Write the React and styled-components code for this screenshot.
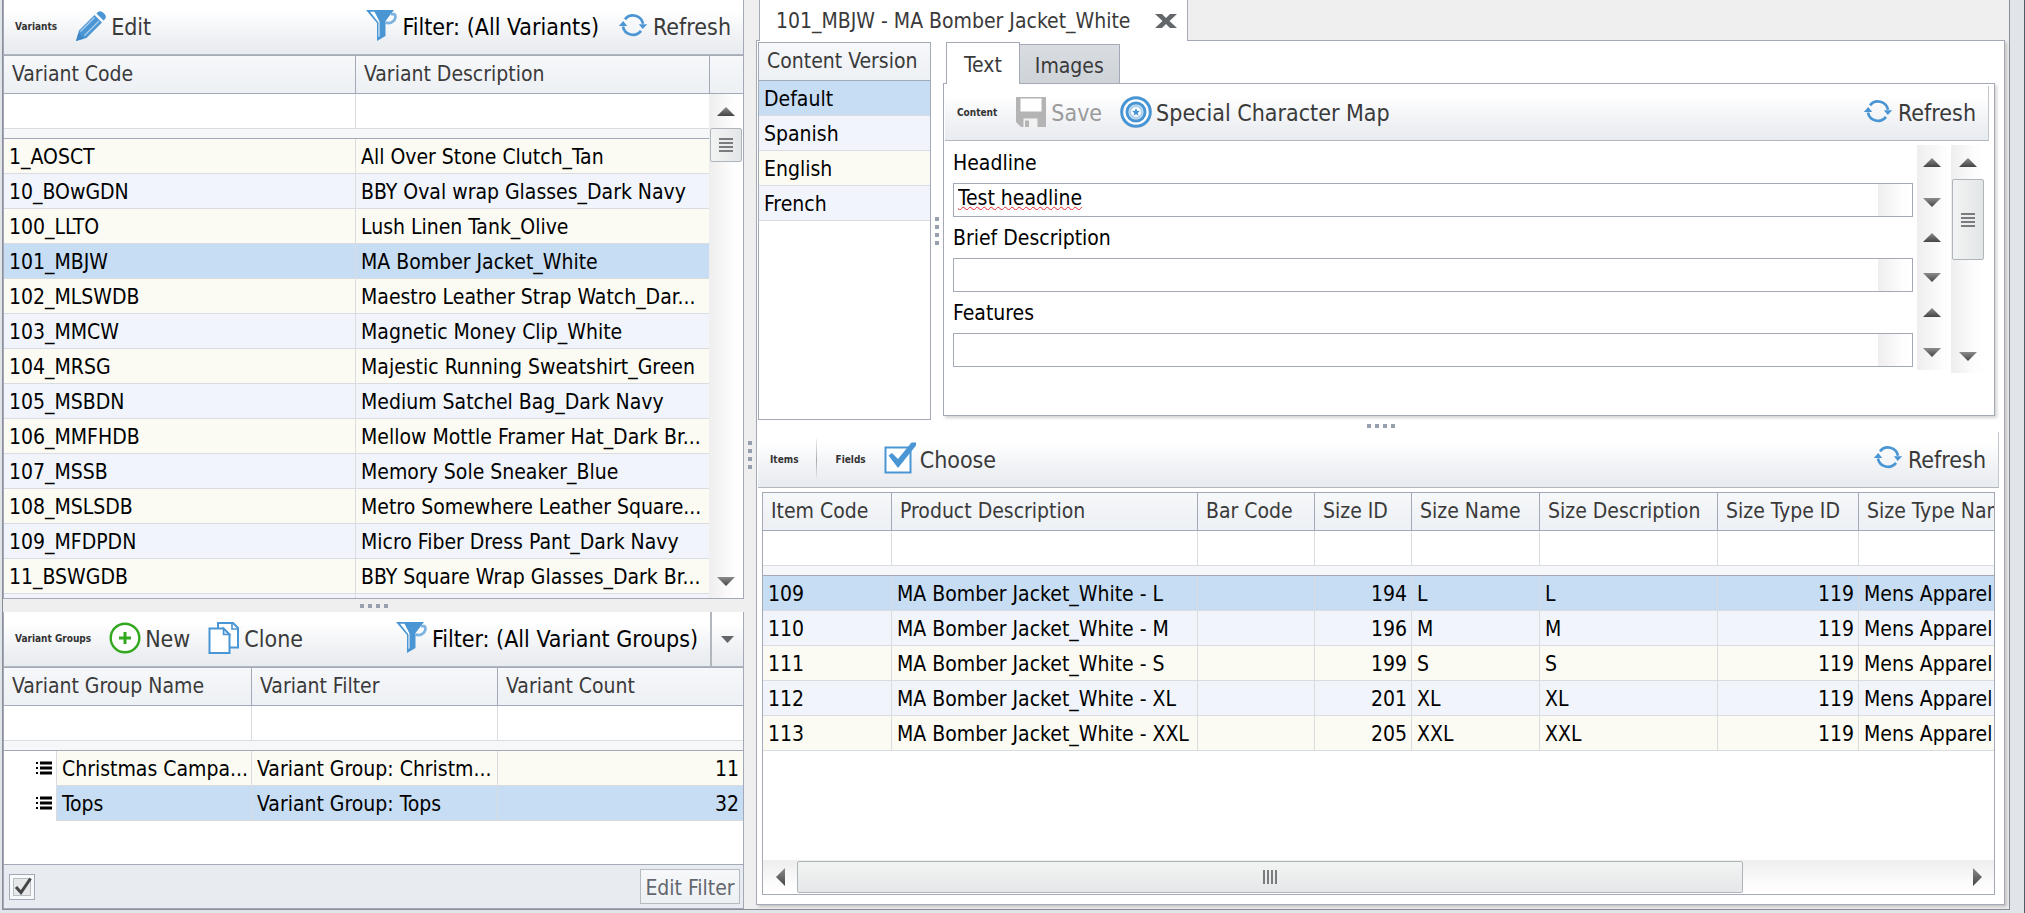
import React, { useState } from 'react';
import styled, { createGlobalStyle, css } from 'styled-components';

const line = '#a3a9b6';
const cellLine = '#d9dce1';
const blue = '#4a95d3';
const selectedBg = '#c7ddf4';
const creamBg = '#fbfbf3';
const paleBg = '#f1f5fb';

const GlobalStyle = createGlobalStyle`
  *, *::before, *::after { box-sizing: border-box; }
  body {
    margin: 0;
    font-family: "DejaVu Sans Condensed", "Noto Sans", sans-serif;
    font-size: 21px;
    line-height: 24px;
    color: #000;
  }
  button, input { font: inherit; color: inherit; }
`;

/* ---------- window and panes ---------- */

const Frame = styled.div`
  height: 100vh;
  padding: 0 14px 3px 2px;
  background: #e1e5e9;
  border-right: 1px solid #555b66;
`;

const Window = styled.main`
  height: 100%;
  display: grid;
  grid-template-columns: minmax(0, 741fr) 12px minmax(0, 1253fr);
  background: #efefef;
  border: 1px solid #888e98;
  border-top: none;
`;

const LeftPane = styled.div`
  display: flex;
  flex-direction: column;
  min-width: 0;
  min-height: 0;
`;

const ListPanel = styled.section`
  display: flex;
  flex-direction: column;
  flex: ${(p) => (p.$grow ? '1 1 0' : '0 0 auto')};
  min-height: 0;
  background: #fff;
  border: 1px solid ${line};
  border-top: none;
`;

const Splitter = styled.div`
  flex: 0 0 ${(p) => p.$size || 12}px;
  display: flex;
  flex-direction: ${(p) => (p.$vertical ? 'column' : 'row')};
  align-items: center;
  justify-content: center;
  gap: 4px;
`;

const Dot = styled.span`
  width: 4px;
  height: 4px;
  background: #97a0ad;
`;

function Grip(props) {
  return (
    <Splitter role="separator" {...props}>
      <Dot /><Dot /><Dot /><Dot />
    </Splitter>
  );
}

/* ---------- toolbar ---------- */

const Toolbar = styled.div`
  flex: 0 0 ${(p) => (p.$tall ? 56 : 55)}px;
  display: flex;
  align-items: center;
  gap: 18px;
  padding: 0 ${(p) => (p.$flush ? 0 : 12)}px 0 ${(p) => (p.$inset ? 12 : 11)}px;
  margin-right: ${(p) => (p.$inset ? 5 : 0)}px;
  background: linear-gradient(#fff 20%, #f0f2f5 65%, #e8ebef);
  border-bottom: 1px solid #b2b6bd;
  border-right: ${(p) => (p.$inset ? '1px solid #c3c7ce' : 'none')};
`;

const ToolbarTitle = styled.span`
  font-size: 10px;
  line-height: 12px;
  font-weight: 700;
  color: #333;
  white-space: nowrap;
`;

const ToolButton = styled.button`
  display: flex;
  align-items: center;
  gap: 4px;
  padding: 0;
  border: none;
  background: none;
  font-size: 23px;
  line-height: 28px;
  white-space: nowrap;
  color: ${(p) => (p.$strong ? '#000' : '#3a3a3a')};
  &:disabled { color: #9a9a9a; }
  svg { flex: none; margin-bottom: 3px; }
`;

const Spacer = styled.div`flex: 1;`;

const Divider = styled.span`
  width: 1px;
  height: 42px;
  background: linear-gradient(#eceef0, #a9adb3, #eceef0);
`;

const DropButton = styled.button`
  width: 33px;
  height: 54px;
  margin-left: -6px;
  padding: 0;
  border: none;
  border-left: 2px solid #b2b6bd;
  background: none;
  display: flex;
  align-items: center;
  justify-content: center;
`;

/* ---------- tables ---------- */

const GridArea = styled.div`
  display: flex;
  flex: ${(p) => (p.$grow ? '1 1 0' : '0 0 197px')};
  min-height: 0;
  overflow: hidden;
  border-top: 1px solid ${line};
`;

const TableWrap = styled.div`
  flex: 1;
  min-width: 0;
  overflow: hidden;
`;

const Table = styled.table`
  width: 100%;
  table-layout: fixed;
  border-collapse: separate;
  border-spacing: 0;
`;

const headerCell = css`
  height: 38px;
  background: linear-gradient(#f6f8fa, #edf0f4);
  border-bottom: 1px solid ${line};
`;

const Th = styled.th`
  ${headerCell}
  padding: 0 0 2px 8px;
  border-right: ${(p) => (p.$last ? 'none' : `1px solid ${line}`)};
  font-weight: 400;
  text-align: left;
  white-space: nowrap;
  overflow: hidden;
  color: #3a3a3a;
`;

const FilterCell = styled.td`
  height: 35px;
  padding: 0;
  border-right: ${(p) => (p.$last ? 'none' : `1px solid ${cellLine}`)};
  border-bottom: 1px solid ${cellLine};
`;

const FilterInput = styled.input`
  display: block;
  width: 100%;
  height: 34px;
  padding: 0 6px;
  border: none;
  outline: none;
  background: transparent;
`;

const BandCell = styled.td`
  height: 10px;
  padding: 0;
  background: #f5f7f9;
  border-bottom: 1px solid ${line};
`;

const rowColour = { selected: selectedBg, cream: creamBg, pale: paleBg };

const Tr = styled.tr`
  background: ${(p) => rowColour[p.$tone]};
`;

const Td = styled.td`
  height: 35px;
  padding: 2px 4px 0 5px;
  border-right: ${(p) => (p.$last ? 'none' : `1px solid ${cellLine}`)};
  border-bottom: 1px solid ${cellLine};
  text-align: ${(p) => (p.$num ? 'right' : 'left')};
  white-space: nowrap;
  overflow: hidden;
`;

const IndentTd = styled.td`
  padding: 0 4px 0 0;
  background: #fff;
  border-right: 1px solid ${cellLine};
  text-align: right;
  svg { display: block; margin: 0 0 2px auto; }
`;

function TableHead({ columns, indent }) {
  const last = columns.length - 1;
  return (
    <thead>
      <tr>
        {columns.map((c, i) => (
          <Th key={c} scope="col" $last={i === last} colSpan={indent && i === 0 ? 2 : 1}>{c}</Th>
        ))}
      </tr>
      <tr>
        {columns.map((c, i) => (
          <FilterCell key={c} $last={i === last} colSpan={indent && i === 0 ? 2 : 1}>
            <FilterInput aria-label={`Filter ${c}`} />
          </FilterCell>
        ))}
      </tr>
      <tr><BandCell colSpan={columns.length + (indent ? 1 : 0)} /></tr>
    </thead>
  );
}

/* ---------- scroll bars ---------- */

const ScrollColumn = styled.div`
  flex: 0 0 34px;
  display: flex;
  flex-direction: column;
`;

const ScrollHead = styled.div`
  ${headerCell}
  border-left: 1px solid ${line};
`;

const VTrack = styled.div`
  flex: 1;
  display: flex;
  flex-direction: column;
  min-height: 0;
  background: linear-gradient(90deg, #eeeeee, #fdfdfd 70%, #fff);
`;

const HTrack = styled.div`
  flex: 0 0 34px;
  display: flex;
  background: linear-gradient(#eeeeee, #fcfcfc 70%, #fff);
`;

const ArrowButton = styled.button`
  flex: 0 0 34px;
  display: flex;
  align-items: center;
  justify-content: center;
  padding: 0;
  border: none;
  background: none;
`;

const Thumb = styled.div`
  display: flex;
  align-items: center;
  justify-content: center;
  gap: 2px;
  border: 1px solid #afb4bb;
  border-radius: 2px;
`;

const VThumb = styled(Thumb)`
  flex: 0 0 ${(p) => p.$size}px;
  flex-direction: column;
  margin: 0 1px;
  background: linear-gradient(90deg, #f2f3f3, #e3e6e7);
`;

const HThumb = styled(Thumb)`
  flex: 946;
  margin: 1px 0;
  background: linear-gradient(#f2f3f3, #e5e7e8);
`;

const Rest = styled.div`flex: ${(p) => p.$grow || 1};`;

const Notch = styled.span`
  width: ${(p) => (p.$tall ? 2 : 14)}px;
  height: ${(p) => (p.$tall ? 14 : 2)}px;
  background: #7b7c7e;
`;

const arrowPath = { up: 'M0 9 9 0 18 9Z', down: 'M0 0H18L9 9Z', left: 'M9 0V18L0 9Z', right: 'M0 0V18L9 9Z' };

function Arrow({ dir }) {
  const upright = dir === 'up' || dir === 'down';
  return (
    <svg width={upright ? 18 : 9} height={upright ? 9 : 18} aria-hidden="true">
      <defs>
        <linearGradient id={`arrow-${dir}`} x1="0" y1="0" x2="0" y2="1">
          <stop offset="0" stopColor="#8c8c8c" />
          <stop offset="1" stopColor="#454545" />
        </linearGradient>
      </defs>
      <path d={arrowPath[dir]} fill={`url(#arrow-${dir})`} />
    </svg>
  );
}

function Scroller({ thumb }) {
  return (
    <VTrack>
      <ArrowButton type="button" aria-label="Scroll up"><Arrow dir="up" /></ArrowButton>
      <VThumb $size={thumb}><Notch /><Notch /><Notch /><Notch /></VThumb>
      <Rest />
      <ArrowButton type="button" aria-label="Scroll down"><Arrow dir="down" /></ArrowButton>
    </VTrack>
  );
}

/* ---------- footer ---------- */

const Footer = styled.footer`
  display: flex;
  align-items: center;
  justify-content: space-between;
  height: 44px;
  padding: 0 3px 0 5px;
  background: #e8ebf0;
  border-top: 1px solid ${line};
`;

const CheckLabel = styled.label`
  position: relative;
  display: flex;
  width: 26px;
  height: 26px;
  border: 1px solid ${line};
  background: #f8f9fa;
  padding: 3px;
  svg { position: absolute; left: 4px; top: 2px; pointer-events: none; }
`;

const CheckInput = styled.input`
  appearance: none;
  width: 18px;
  height: 18px;
  margin: 0;
  border: 1px solid #b9bdc4;
  background: #e6e7e8;
`;

const EditFilter = styled.button`
  width: 100px;
  height: 35px;
  padding: 2px 0 0;
  border: 1px solid #b6bac3;
  background: linear-gradient(#f6f8fa, #edf0f3);
  color: #63676e;
`;

/* ---------- document tab ---------- */

const RightPane = styled.div`
  display: flex;
  flex-direction: column;
  min-width: 0;
  min-height: 0;
  padding: 0 4px 4px 0;
`;

const DocTab = styled.div`
  position: relative;
  z-index: 1;
  align-self: flex-start;
  display: flex;
  align-items: center;
  gap: 24px;
  height: 41px;
  margin: 0 0 -1px 3px;
  padding: 1px 10px 0 16px;
  background: #fff;
  border: 1px solid ${line};
  border-width: 0 1px;
  color: #3a3a3a;
  white-space: nowrap;
`;

const CloseButton = styled.button`
  display: flex;
  padding: 0;
  border: none;
  background: none;
`;

const Page = styled.div`
  flex: 1;
  min-height: 0;
  display: flex;
  flex-direction: column;
  padding: 1px 0 0 1px;
  background: #fff;
  border: 1px solid ${line};
  box-shadow: 2px 2px 3px rgba(0, 0, 0, 0.18);
`;

const ContentArea = styled.div`
  flex: 0 0 378px;
  display: flex;
  min-width: 0;
  padding-right: 9px;
`;

const VersionBox = styled.section`
  flex: 0 0 173px;
  border: 1px solid ${line};
`;

const EditorColumn = styled.div`
  flex: 1;
  min-width: 0;
  display: flex;
  flex-direction: column;
  padding-bottom: 4px;
`;

const TabStrip = styled.div`
  display: flex;
  align-items: flex-end;
  height: 42px;
  margin: 0 0 -1px 3px;
  position: relative;
  z-index: 1;
`;

const Tab = styled.button`
  height: ${(p) => (p.$active ? 42 : 40)}px;
  padding: 3px ${(p) => (p.$active ? 17 : 15)}px 0;
  border: 1px solid ${line};
  border-bottom: ${(p) => (p.$active ? 'none' : `1px solid ${line}`)};
  border-left-width: ${(p) => (p.$active ? 1 : 0)}px;
  background: ${(p) => (p.$active ? '#fff' : 'linear-gradient(#d9dde2, #ced3d8)')};
  color: #3a3a3a;
`;

const EditorPanel = styled.div`
  flex: 1;
  display: flex;
  flex-direction: column;
  padding: 2px 0 0 1px;
  background: #fff;
  border: 1px solid ${line};
  box-shadow: 2px 2px 3px rgba(0, 0, 0, 0.18);
`;

const FieldsArea = styled.div`
  display: flex;
  gap: 4px;
  padding: 4px 9px 0 8px;
`;

const Fields = styled.div`
  flex: 1;
  min-width: 0;
`;

const FieldRow = styled.div`
  display: flex;
  gap: 4px;
  height: 75px;
`;

const FieldMain = styled.div`
  flex: 1;
  min-width: 0;
`;

const FieldLabel = styled.label`
  display: block;
  padding-top: 6px;
  height: 38px;
`;

const InputBox = styled.div`
  display: flex;
  height: 34px;
  border: 1px solid ${line};
  background: #fff;
`;

const TextInput = styled.input`
  flex: 1;
  min-width: 0;
  padding: 0 4px 4px;
  border: none;
  outline: none;
  background: none;
  text-decoration: ${(p) => (p.$misspelt ? 'underline wavy #e8262b 1px' : 'none')};
`;

const InputGutter = styled.span`
  width: 34px;
  background: linear-gradient(90deg, #eeeeee, #fdfdfd 70%, #fff);
`;

const Spin = styled.div`
  width: 30px;
  display: flex;
  flex-direction: column;
  background: linear-gradient(90deg, #eeeeee, #fdfdfd 90%);
`;

const SpinButton = styled(ArrowButton)`
  flex: 0 0 ${(p) => (p.$first ? 34 : 41)}px;
  padding-top: ${(p) => (p.$first ? 0 : 5)}px;
`;

const FieldScroll = styled.div`
  width: 34px;
  min-height: 228px;
  display: flex;
  flex-direction: column;
`;

/* ---------- items ---------- */

const ItemsBox = styled.section`
  flex: 1;
  min-height: 0;
  display: flex;
  flex-direction: column;
  margin: 4px 9px 9px 4px;
  border: 1px solid ${line};
  overflow: hidden;
`;

/* ---------- icons ---------- */

const Icon = ({ children, viewBox = '0 0 32 32' }) => (
  <svg width="32" height="32" viewBox={viewBox} fill="none" aria-hidden="true">{children}</svg>
);

const PencilIcon = () => (
  <Icon>
    <path d="M1 31 4 20.500 19.500 5 27 12.500 11.500 28Z" fill={blue} />
    <path d="M5.500 21.500 19.500 7.500M9.500 25.500 24 11" stroke="#a9cdec" strokeWidth="1.400" />
    <path d="M1 31 3.500 23 9 28.500Z" fill="#3f86c6" />
    <path d="M21.500 3.500C24 0 26.500.8 28.800 3.200 31.200 5.500 32 8 28.500 10.500Z" fill={blue} />
  </Icon>
);

const FunnelIcon = () => (
  <Icon>
    <path d="M0 0H28L19.500 11V26L11 31V13Z" fill={blue} />
    <path d="M4 1.800H8.500L13.500 11.500V26L12.500 27.300V12.500Z" fill="#fff" />
    <path d="M25 4.500C30 2.500 30.500 7.500 28 10.500 25.500 13 22 13.500 19.500 12.500" stroke="#7db3e0" strokeWidth="2.800" />
  </Icon>
);

const RefreshIcon = () => (
  <Icon viewBox="-2 -1 36 36">
    <path d="M7 9.500A11.500 11.500 0 0 1 27.300 14.500" stroke={blue} strokeWidth="3" />
    <path d="M25 22.500A11.500 11.500 0 0 1 4.700 17.500" stroke={blue} strokeWidth="3" />
    <path d="M22.500 15H32L27 20.500Z" fill={blue} />
    <path d="M0 17H9.500L5 11.500Z" fill={blue} />
  </Icon>
);

const PlusIcon = () => (
  <Icon>
    <circle cx="16" cy="16" r="14.300" stroke="#32a81f" strokeWidth="2.400" fill="#fff" />
    <path d="M16 10V22M10 16H22" stroke="#32a81f" strokeWidth="3" />
  </Icon>
);

const CloneIcon = () => (
  <Icon>
    <path d="M10 6V1H25L30 6V25.500H22" fill="#fff" stroke={blue} strokeWidth="2" />
    <path d="M24 1V7H30" stroke={blue} strokeWidth="1.600" />
    <path d="M1.500 6.500H15.500L21.500 12.500V31H1.500Z" fill="#fff" stroke={blue} strokeWidth="2" />
    <path d="M15.500 6.500V12.500H21.500Z" fill="#cfe3f5" stroke={blue} strokeWidth="1.600" />
  </Icon>
);

const SaveIcon = () => (
  <Icon>
    <path d="M1 1H31V31H6L1 26Z" fill="#b4b4b4" />
    <path d="M5.500 2.500H26.500V15.500H5.500Z" fill="#fff" />
    <path d="M8.500 22.500H22.500V31H8.500Z" fill="#f2f2f2" />
    <path d="M10 24.500H14V31H10Z" fill="#b4b4b4" />
  </Icon>
);

const TargetIcon = () => (
  <Icon>
    <circle cx="16" cy="16" r="14.300" stroke={blue} strokeWidth="3" fill="#fff" />
    <circle cx="16" cy="16" r="9" stroke={blue} strokeWidth="3" />
    <circle cx="16" cy="16" r="6" stroke="#a9cdec" strokeWidth="2" />
    <path d="M16 12 17.200 14.700 20 15 17.800 16.900 18.500 19.800 16 18.200 13.500 19.800 14.200 16.900 12 15 14.800 14.700Z" fill={blue} />
  </Icon>
);

const ChooseIcon = () => (
  <Icon>
    <path d="M1.500 5.500H26.500V30.500H1.500Z" fill="#fff" stroke={blue} strokeWidth="2" />
    <path d="M4.500 13.500 8 11 14 17 27.500.5H32V3.500L14 26Z" fill={blue} />
  </Icon>
);

const ListIcon = () => (
  <svg width="17" height="14" aria-hidden="true">
    <path d="M1 2H3M1 7H3M1 12H3" stroke="#000" strokeWidth="2" />
    <path d="M5 2H17M5 7H17M5 12H17" stroke="#000" strokeWidth="3" />
  </svg>
);

const CloseIcon = () => (
  <svg width="22" height="14" aria-hidden="true">
    <path d="M0 0H7L11 4 15 0H22L14.500 7 22 14H15L11 10 7 14H0L7.500 7Z" fill="#63676c" />
  </svg>
);

const CheckIcon = () => (
  <svg width="19" height="18" aria-hidden="true">
    <path d="M2 10 7 15.500 16.500 1.500" stroke="#454545" strokeWidth="3" fill="none" />
  </svg>
);

const DropIcon = () => (
  <svg width="13" height="7" aria-hidden="true"><path d="M0 0H13L6.500 7Z" fill="#63676c" /></svg>
);

/* ---------- data ---------- */

const variants = [
  ['1_AOSCT', 'All Over Stone Clutch_Tan'],
  ['10_BOwGDN', 'BBY Oval wrap Glasses_Dark Navy'],
  ['100_LLTO', 'Lush Linen Tank_Olive'],
  ['101_MBJW', 'MA Bomber Jacket_White'],
  ['102_MLSWDB', 'Maestro Leather Strap Watch_Dar...'],
  ['103_MMCW', 'Magnetic Money Clip_White'],
  ['104_MRSG', 'Majestic Running Sweatshirt_Green'],
  ['105_MSBDN', 'Medium Satchel Bag_Dark Navy'],
  ['106_MMFHDB', 'Mellow Mottle Framer Hat_Dark Br...'],
  ['107_MSSB', 'Memory Sole Sneaker_Blue'],
  ['108_MSLSDB', 'Metro Somewhere Leather Square...'],
  ['109_MFDPDN', 'Micro Fiber Dress Pant_Dark Navy'],
  ['11_BSWGDB', 'BBY Square Wrap Glasses_Dark Br...'],
  ['', ''],
];

const groups = [
  ['Christmas Campa...', 'Variant Group: Christm...', 11],
  ['Tops', 'Variant Group: Tops', 32],
];

const versions = [['Default', 'selected'], ['Spanish', 'pale'], ['English', 'cream'], ['French', 'pale']];

const itemColumns = ['Item Code', 'Product Description', 'Bar Code', 'Size ID', 'Size Name', 'Size Description', 'Size Type ID', 'Size Type Name'];
const itemWidths = [129, 306, 117, 97, 128, 178, 141];
const items = [
  ['109', 194, 'L'],
  ['110', 196, 'M'],
  ['111', 199, 'S'],
  ['112', 201, 'XL'],
  ['113', 205, 'XXL'],
];

/* ---------- sections ---------- */

function Variants() {
  return (
    <ListPanel $grow>
      <Toolbar>
        <ToolbarTitle>Variants</ToolbarTitle>
        <ToolButton type="button"><PencilIcon />Edit</ToolButton>
        <Spacer />
        <ToolButton type="button" $strong><FunnelIcon />Filter: (All Variants)</ToolButton>
        <ToolButton type="button"><RefreshIcon />Refresh</ToolButton>
      </Toolbar>
      <GridArea $grow>
        <TableWrap>
          <Table>
            <colgroup><col width="352" /><col /></colgroup>
            <TableHead columns={['Variant Code', 'Variant Description']} />
            <tbody>
              {variants.map(([code, text], i) => (
                <Tr key={code} $tone={i === 3 ? 'selected' : i % 2 ? 'pale' : 'cream'}>
                  <Td>{code}</Td>
                  <Td $last>{text}</Td>
                </Tr>
              ))}
            </tbody>
          </Table>
        </TableWrap>
        <ScrollColumn>
          <ScrollHead />
          <Scroller thumb={34} />
        </ScrollColumn>
      </GridArea>
    </ListPanel>
  );
}

function VariantGroups() {
  return (
    <ListPanel>
      <Toolbar $flush>
        <ToolbarTitle>Variant Groups</ToolbarTitle>
        <ToolButton type="button"><PlusIcon />New</ToolButton>
        <ToolButton type="button"><CloneIcon />Clone</ToolButton>
        <Spacer />
        <ToolButton type="button" $strong><FunnelIcon />Filter: (All Variant Groups)</ToolButton>
        <DropButton type="button" aria-label="Filter options"><DropIcon /></DropButton>
      </Toolbar>
      <GridArea>
        <TableWrap>
          <Table>
            <colgroup><col width="53" /><col width="195" /><col width="246" /><col /></colgroup>
            <TableHead indent columns={['Variant Group Name', 'Variant Filter', 'Variant Count']} />
            <tbody>
              {groups.map(([name, filter, count], i) => (
                <Tr key={name} $tone={i ? 'selected' : 'cream'}>
                  <IndentTd><ListIcon /></IndentTd>
                  <Td>{name}</Td>
                  <Td>{filter}</Td>
                  <Td $num $last>{count}</Td>
                </Tr>
              ))}
            </tbody>
          </Table>
        </TableWrap>
      </GridArea>
      <Footer>
        <CheckLabel>
          <CheckInput type="checkbox" defaultChecked aria-label="Filter enabled" />
          <CheckIcon />
        </CheckLabel>
        <EditFilter type="button">Edit Filter</EditFilter>
      </Footer>
    </ListPanel>
  );
}

function Field({ id, label, value, misspelt }) {
  const [text, setText] = useState(value || '');
  return (
    <FieldRow>
      <FieldMain>
        <FieldLabel htmlFor={id}>{label}</FieldLabel>
        <InputBox>
          <TextInput id={id} type="text" value={text} $misspelt={misspelt} onChange={(e) => setText(e.target.value)} />
          <InputGutter />
        </InputBox>
      </FieldMain>
      <Spin>
        <SpinButton type="button" $first aria-label={`${label} up`}><Arrow dir="up" /></SpinButton>
        <SpinButton type="button" aria-label={`${label} down`}><Arrow dir="down" /></SpinButton>
      </Spin>
    </FieldRow>
  );
}

function ContentEditor() {
  return (
    <ContentArea>
      <VersionBox>
        <Table>
          <thead><tr><Th scope="col" $last>Content Version</Th></tr></thead>
          <tbody>
            {versions.map(([name, tone]) => (
              <Tr key={name} $tone={tone}><Td $last>{name}</Td></Tr>
            ))}
          </tbody>
        </Table>
      </VersionBox>
      <Grip $vertical />
      <EditorColumn>
        <TabStrip role="tablist">
          <Tab type="button" role="tab" aria-selected="true" $active>Text</Tab>
          <Tab type="button" role="tab" aria-selected="false">Images</Tab>
        </TabStrip>
        <EditorPanel>
          <Toolbar $inset>
            <ToolbarTitle>Content</ToolbarTitle>
            <ToolButton type="button" disabled><SaveIcon />Save</ToolButton>
            <ToolButton type="button"><TargetIcon />Special Character Map</ToolButton>
            <Spacer />
            <ToolButton type="button"><RefreshIcon />Refresh</ToolButton>
          </Toolbar>
          <FieldsArea>
            <Fields>
              <Field id="headline" label="Headline" value="Test headline" misspelt />
              <Field id="brief" label="Brief Description" />
              <Field id="features" label="Features" />
            </Fields>
            <FieldScroll><Scroller thumb={81} /></FieldScroll>
          </FieldsArea>
        </EditorPanel>
      </EditorColumn>
    </ContentArea>
  );
}

function Items() {
  return (
    <>
      <Toolbar $inset $tall>
        <ToolbarTitle>Items</ToolbarTitle>
        <Divider />
        <ToolbarTitle>Fields</ToolbarTitle>
        <ToolButton type="button"><ChooseIcon />Choose</ToolButton>
        <Spacer />
        <ToolButton type="button"><RefreshIcon />Refresh</ToolButton>
      </Toolbar>
      <ItemsBox>
        <TableWrap>
          <Table>
            <colgroup>
              {itemWidths.map((w, i) => <col key={i} width={w} />)}
              <col />
            </colgroup>
            <TableHead columns={itemColumns} />
            <tbody>
              {items.map(([code, sizeId, size], i) => (
                <Tr key={code} $tone={i === 0 ? 'selected' : i % 2 ? 'pale' : 'cream'}>
                  <Td>{code}</Td>
                  <Td>{`MA Bomber Jacket_White - ${size}`}</Td>
                  <Td />
                  <Td $num>{sizeId}</Td>
                  <Td>{size}</Td>
                  <Td>{size}</Td>
                  <Td $num>119</Td>
                  <Td $last>Mens Apparel</Td>
                </Tr>
              ))}
            </tbody>
          </Table>
        </TableWrap>
        <HTrack>
          <ArrowButton type="button" aria-label="Scroll left"><Arrow dir="left" /></ArrowButton>
          <HThumb><Notch $tall /><Notch $tall /><Notch $tall /><Notch $tall /></HThumb>
          <Rest $grow={217} />
          <ArrowButton type="button" aria-label="Scroll right"><Arrow dir="right" /></ArrowButton>
        </HTrack>
      </ItemsBox>
    </>
  );
}

export default function App() {
  return (
    <>
      <GlobalStyle />
      <Frame>
        <Window>
          <LeftPane>
            <Variants />
            <Grip $size={13} />
            <VariantGroups />
          </LeftPane>
          <Grip $vertical />
          <RightPane>
            <DocTab>
              101_MBJW - MA Bomber Jacket_White
              <CloseButton type="button" aria-label="Close tab"><CloseIcon /></CloseButton>
            </DocTab>
            <Page>
              <ContentEditor />
              <Grip />
              <Items />
            </Page>
          </RightPane>
        </Window>
      </Frame>
    </>
  );
}
